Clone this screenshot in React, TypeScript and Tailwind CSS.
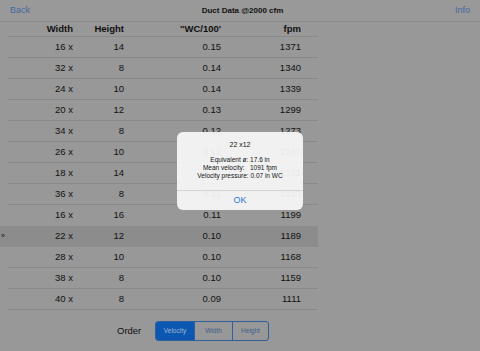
import React from 'react';

const rows = [
  { w: 16, h: 14, wc: '0.15', fpm: 1371 },
  { w: 32, h: 8, wc: '0.14', fpm: 1340 },
  { w: 24, h: 10, wc: '0.14', fpm: 1339 },
  { w: 20, h: 12, wc: '0.13', fpm: 1299 },
  { w: 34, h: 8, wc: '0.12', fpm: 1273 },
  { w: 26, h: 10, wc: '0.12', fpm: 1247 },
  { w: 18, h: 14, wc: '0.12', fpm: 1222 },
  { w: 36, h: 8, wc: '0.11', fpm: 1213 },
  { w: 16, h: 16, wc: '0.11', fpm: 1199 },
  { w: 22, h: 12, wc: '0.10', fpm: 1189 },
  { w: 28, h: 10, wc: '0.10', fpm: 1168 },
  { w: 38, h: 8, wc: '0.10', fpm: 1159 },
  { w: 40, h: 8, wc: '0.09', fpm: 1111 },
];

const selected = 9;

export default function App() {
  return (
    <div
      className="relative w-[480px] h-[351px] overflow-hidden bg-[#989898] text-[#111]"
      style={{ fontFamily: '"Liberation Sans", Arial, sans-serif' }}
    >
      {/* nav bar */}
      <div className="h-[22px] flex items-center justify-between px-[10px] bg-[#999999] border-b border-[#8a8a8a]">
        <span className="text-[9px] text-[#45699b]">Back</span>
        <span className="text-[8px] font-bold">Duct Data @2000 cfm</span>
        <span className="text-[9px] text-[#45699b]">Info</span>
      </div>

      {/* table */}
      <div className="w-[318px]">
        <div className="h-[15px] ml-2 border-b border-[#8a8a8a] grid grid-cols-[65px_51px_97px_80px] items-center text-right text-[9.5px] font-bold">
          <span>Width</span>
          <span>Height</span>
          <span>"WC/100'</span>
          <span>fpm</span>
        </div>
        {rows.map((r, i) => (
          <div key={i} className={i === selected ? 'relative bg-[#8c8c8c]' : 'relative'}>
            {i === selected && (
              <span className="absolute left-[1px] top-[6px] text-[7px] leading-none">»</span>
            )}
            <div
              className={
                'h-[21px] ml-2 grid grid-cols-[65px_51px_97px_80px] items-center text-right text-[9.5px] ' +
                (i === selected || i === selected - 1 ? 'border-b border-transparent' : 'border-b border-[#8a8a8a]')
              }
            >
              <span>{r.w} x</span>
              <span>{r.h}</span>
              <span>{r.wc}</span>
              <span>{r.fpm}</span>
            </div>
          </div>
        ))}

        {/* order control */}
        <div className="mt-[11px] flex items-center">
          <span className="ml-[117px] w-[38px] text-[9.5px]">Order</span>
          <div className="flex h-[20px] border border-[#2f5f9e] rounded-[3px] overflow-hidden text-[6.5px]">
            <div className="w-[38px] flex items-center justify-center bg-[#0c57b1] text-[#9fb4d2]">Velocity</div>
            <div className="w-[38px] flex items-center justify-center border-l border-[#2f5f9e] text-[#3d5f8c]">Width</div>
            <div className="w-[36px] flex items-center justify-center border-l border-[#2f5f9e] text-[#3d5f8c]">Height</div>
          </div>
        </div>
      </div>

      {/* alert */}
      <div className="absolute left-[177px] top-[132px] w-[126px] h-[78px] rounded-[6px] bg-[#f6f6f6]/[0.94] flex flex-col text-[#111]">
        <div className="flex-1 flex flex-col items-center">
          <div className="mt-[9px] text-[7px] leading-[8px]">22 x12</div>
          <div className="mt-[7px] text-[6.5px] leading-[8px] text-center">
            <div>Equivalent ø: 17.6 in</div>
            <div>Mean velocity:&nbsp;&nbsp; 1091 fpm</div>
            <div>Velocity pressure: 0.07 in WC</div>
          </div>
        </div>
        <div className="h-[20px] border-t border-[#d4d4d4] flex items-center justify-center text-[9px] text-[#2a7bd0]">
          OK
        </div>
      </div>
    </div>
  );
}
